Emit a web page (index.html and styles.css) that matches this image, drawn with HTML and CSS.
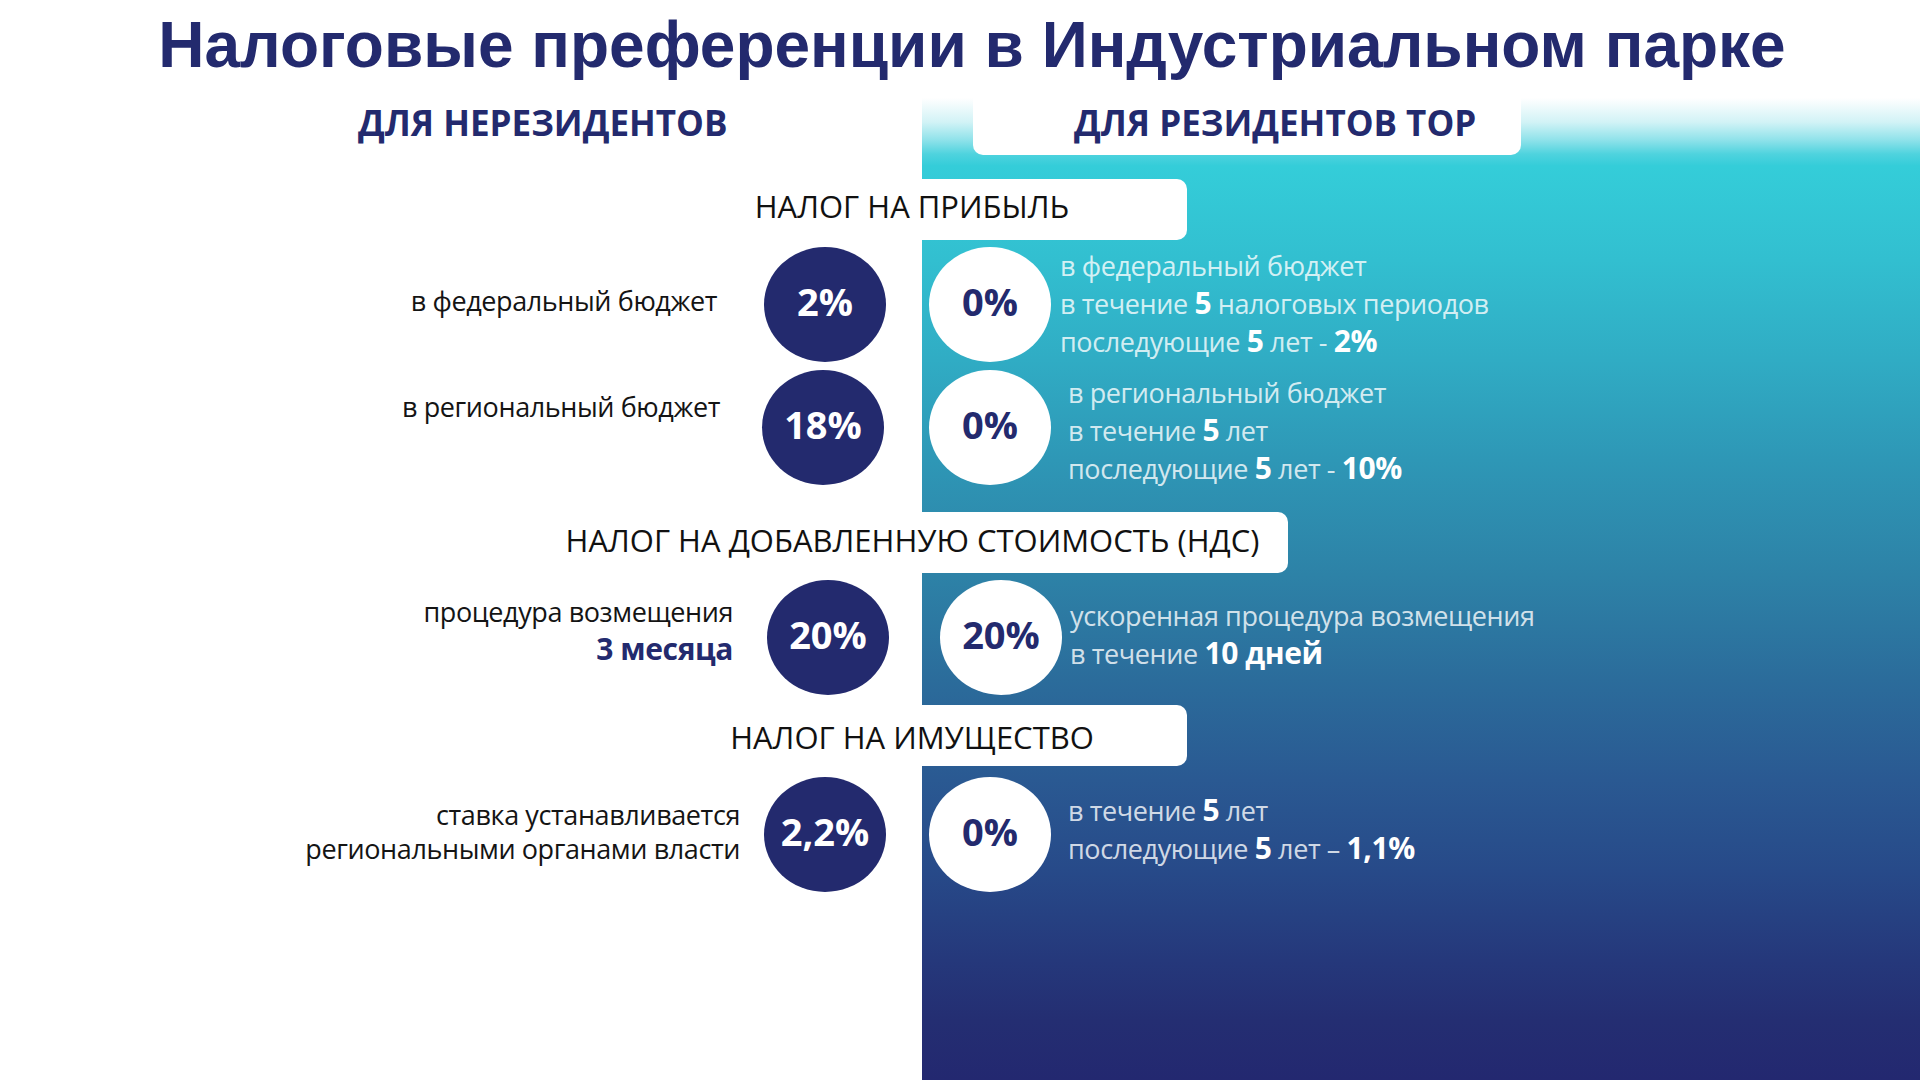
FILE: index.html
```html
<!DOCTYPE html>
<html lang="ru">
<head>
<meta charset="utf-8">
<title>Налоговые преференции в Индустриальном парке</title>
<link rel="stylesheet" href="styles.css">
</head>
<body>
<div class="slide">
  <h1 class="title">Налоговые преференции в Индустриальном парке</h1>

  <div class="col-heads">
    <div class="col-head col-head--left">ДЛЯ НЕРЕЗИДЕНТОВ</div>
    <div class="col-head col-head--right">ДЛЯ РЕЗИДЕНТОВ ТОР</div>
  </div>

  <div class="section-head section-head--profit">НАЛОГ НА ПРИБЫЛЬ</div>

  <div class="row row--fed">
    <div class="label">в федеральный бюджет</div>
    <div class="dot dot--dark">2%</div>
    <div class="dot dot--light">0%</div>
    <div class="note">в федеральный бюджет<br>в течение <b class="b">5</b> налоговых периодов<br>последующие <b class="b">5</b> лет - <b class="b">2%</b></div>
  </div>

  <div class="row row--reg">
    <div class="label">в региональный бюджет</div>
    <div class="dot dot--dark">18%</div>
    <div class="dot dot--light">0%</div>
    <div class="note">в региональный бюджет<br>в течение <b class="b">5</b> лет<br>последующие <b class="b">5</b> лет - <b class="b">10%</b></div>
  </div>

  <div class="section-head section-head--vat">НАЛОГ НА ДОБАВЛЕННУЮ СТОИМОСТЬ (НДС)</div>

  <div class="row row--vat">
    <div class="label">процедура возмещения<br><b class="accent">3 месяца</b></div>
    <div class="dot dot--dark">20%</div>
    <div class="dot dot--light">20%</div>
    <div class="note">ускоренная процедура возмещения<br>в течение <b class="b">10 дней</b></div>
  </div>

  <div class="section-head section-head--prop">НАЛОГ НА ИМУЩЕСТВО</div>

  <div class="row row--prop">
    <div class="label">ставка устанавливается<br>региональными органами власти</div>
    <div class="dot dot--dark">2,2%</div>
    <div class="dot dot--light">0%</div>
    <div class="note">в течение <b class="b">5</b> лет<br>последующие <b class="b">5</b> лет – <b class="b">1,1%</b></div>
  </div>
</div>
</body>
</html>
```

FILE: styles.css
```css
* { box-sizing: border-box; }

html, body {
  margin: 0;
  padding: 0;
}

body {
  font-family: "Open Sans", "Noto Sans", "DejaVu Sans", sans-serif;
  background: #ffffff;
}

.slide {
  width: 1920px;
  height: 1080px;
  overflow: hidden;
  background:
    linear-gradient(#ffffff, #ffffff) 0 0 / 922px 100% no-repeat,
    linear-gradient(180deg,
      #ffffff 0px,
      #ffffff 98px,
      #d2f3f6 122px,
      #8fe2ea 140px,
      #4fd3de 154px,
      #34cdd9 166px,
      #32bfd0 260px,
      #30acc4 360px,
      #2e97b6 460px,
      #2d82a7 575px,
      #2b6c9b 680px,
      #2a5992 780px,
      #274a89 870px,
      #25387b 960px,
      #242e72 1020px,
      #232870 1080px);
}

.title {
  margin: 0;
  padding: 9px 0 0 24px;
  height: 81px;
  font-family: "Liberation Sans", Arial, sans-serif;
  font-weight: 700;
  font-size: 64px;
  line-height: 72px;
  text-align: center;
  color: #232a6e;
  white-space: nowrap;
}

.col-heads {
  display: flex;
  margin-top: 17px;
  height: 57px;
}

.col-head {
  font-weight: 700;
  font-size: 35px;
  line-height: 49px;
  color: #232a6e;
  white-space: nowrap;
}

.col-head--left {
  width: 973px;
  padding-left: 358px;
}

.col-head--right {
  width: 548px;
  height: 57px;
  padding-left: 101px;
  background: #ffffff;
  border-radius: 0 0 10px 10px;
}

.section-head {
  height: 61px;
  background: #ffffff;
  border-radius: 10px;
  font-size: 31px;
  line-height: 44px;
  text-align: center;
  color: #111111;
  white-space: nowrap;
}

.section-head--profit {
  margin: 24px 0 0 637px;
  width: 550px;
  padding-top: 5px;
}

.section-head--vat {
  margin: 27px 0 0 537px;
  width: 751px;
  padding-top: 6px;
}

.section-head--prop {
  margin: 10px 0 0 637px;
  width: 550px;
  padding-top: 10px;
}

.row {
  display: flex;
  align-items: flex-start;
  height: 115px;
}

.row--fed  { margin-top: 7px;  --lw: 717px; --lt: 35px; --g1: 47px; --g2: 43px; --g3: 9px;  --nt: 0px; }
.row--reg  { margin-top: 8px;  --lw: 720px; --lt: 18px; --g1: 42px; --g2: 45px; --g3: 17px; --nt: 4px; }
.row--vat  { margin-top: 7px;  --lw: 733px; --lt: 13px; --g1: 34px; --g2: 51px; --g3: 8px;  --nt: 17px; }
.row--prop { margin-top: 11px; --lw: 740px; --lt: 21px; --g1: 24px; --g2: 43px; --g3: 17px; --nt: 15px; }

.label {
  flex: 0 0 auto;
  width: var(--lw);
  margin-top: var(--lt);
  font-size: 27px;
  letter-spacing: -0.4px;
  line-height: 38px;
  text-align: right;
  color: #141414;
  white-space: nowrap;
}

.row--prop .label {
  line-height: 34px;
}

.accent {
  font-weight: 700;
  font-size: 30px;
  line-height: 1;
  color: #232a6e;
}

.dot {
  flex: 0 0 auto;
  width: 122px;
  height: 115px;
  padding-bottom: 8px;
  border-radius: 50%;
  display: flex;
  align-items: center;
  justify-content: center;
  font-weight: 700;
  font-size: 38px;
  line-height: 1;
}

.dot--dark {
  margin-left: var(--g1);
  background: #232a6e;
  color: #ffffff;
}

.dot--light {
  margin-left: var(--g2);
  background: #ffffff;
  color: #232a6e;
}

.note {
  flex: 0 0 auto;
  margin-left: var(--g3);
  margin-top: var(--nt);
  font-size: 27px;
  letter-spacing: -0.4px;
  line-height: 38px;
  color: rgba(255, 255, 255, 0.8);
  white-space: nowrap;
}

.b {
  font-weight: 700;
  font-size: 30px;
  line-height: 1;
  color: #ffffff;
}
```
